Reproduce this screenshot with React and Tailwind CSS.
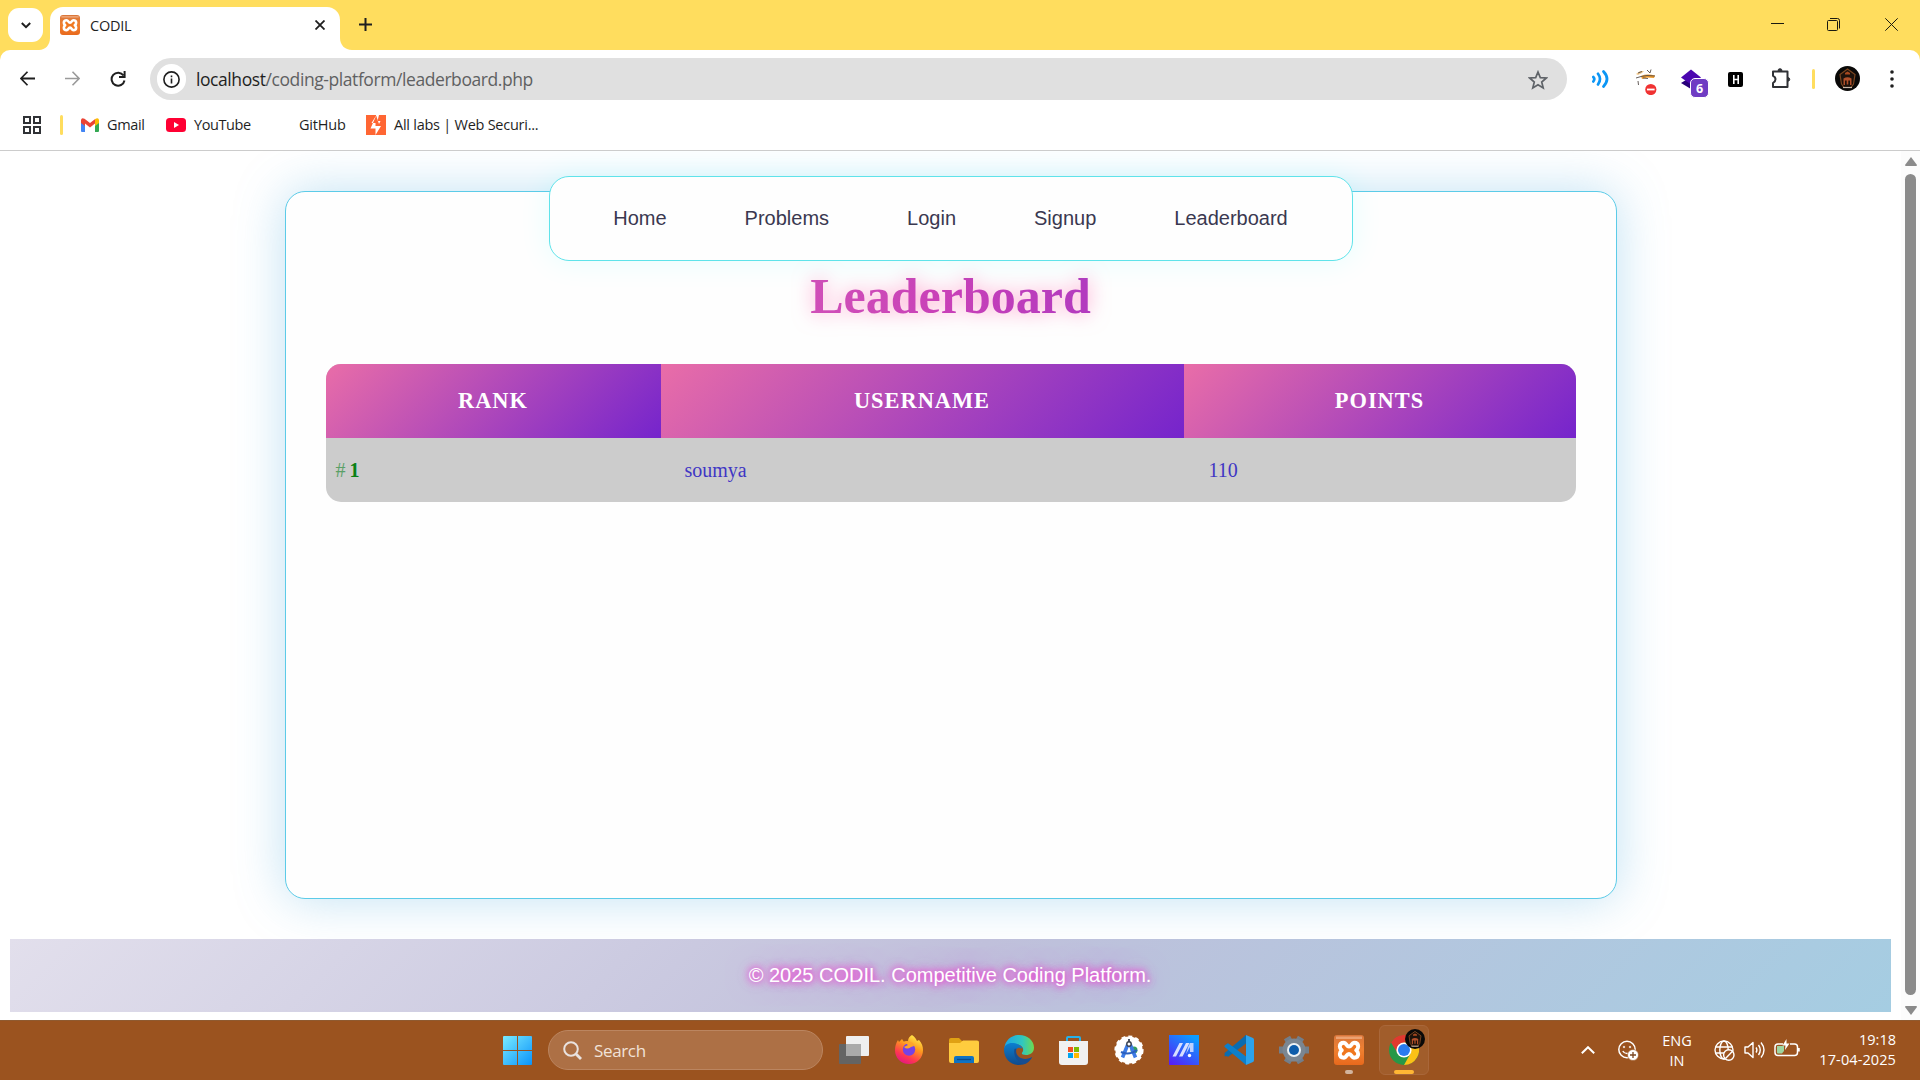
import React from "react";

const ui = "font-['Open_Sans','Noto_Sans',sans-serif]";

function Xampp({ size }) {
  return (
    <span
      className="flex shrink-0 items-center justify-center rounded-[3px] bg-linear-to-b from-[#d9763a] via-[#f08030] to-[#e8691c]"
      style={{ width: size, height: size }}
    >
      <svg viewBox="0 0 30 30" className="h-full w-full" fill="none" strokeLinecap="round" strokeLinejoin="round">
        <path d="M2 1.500H28V4H2Z" fill="#f2b48c" opacity=".7" />
        <path
          d="M10 7.800C7 7.800 5.800 9.500 5.800 11.500C5.800 13.200 6.600 14.300 7.800 15.300C6.600 16.300 5.800 17.400 5.800 19C5.800 21.200 7 22.700 10 22.700C12.500 22.700 12.300 19 15 19C17.700 19 17.500 22.700 20 22.700C23 22.700 24.200 21.200 24.200 19C24.200 17.400 23.400 16.300 22.200 15.300C23.400 14.300 24.200 13.200 24.200 11.500C24.200 9.500 23 7.800 20 7.800C17.500 7.800 17.700 11.500 15 11.500C12.300 11.500 12.500 7.800 10 7.800Z"
          fill="#f0771f"
          stroke="#fff"
          strokeWidth="3.900"
        />
      </svg>
    </span>
  );
}

function Avatar({ className }) {
  return (
    <svg viewBox="0 0 25 25" className={className}>
      <circle cx="12.5" cy="12.500" r="12.500" fill="#0a0908" />
      <path d="M12.500 3L20 8.500L18.500 18L16 21.500H9L6.500 18L5 8.500Z" fill="#1d120b" stroke="#7a4520" strokeWidth="1.200" />
      <path d="M10 7L12.500 5.500L15 7V8.500H10Z" fill="#a8481f" />
      <path d="M8.500 12.500Q12.500 10 16.500 12.500V19H15V14.500H13.300V18.500H11.700V14.500H10V19H8.500Z" fill="#b04f2a" />
      <path d="M8 21.500H17" stroke="#c9b8a8" strokeWidth="1.200" />
    </svg>
  );
}

function TabStrip() {
  return (
    <div className="flex h-[50px] items-start bg-[#ffdd5e] text-[#1f1f1f]">
      <div className="mt-2 ml-2 flex h-[34px] w-[35px] items-center justify-center rounded-[11px] bg-white">
        <svg viewBox="0 0 10 7" className="h-[7px] w-[10px]" fill="none" stroke="#1f1f1f" strokeWidth="2">
          <path d="M.8 1L5 5.200L9.200 1" />
        </svg>
      </div>
      <svg viewBox="0 0 12 12" className="-ml-[4px] mt-[38px] h-3 w-[11px]" preserveAspectRatio="none">
        <path d="M12 0V12H0C7 12 12 7 12 0Z" fill="#fff" />
      </svg>
      <div className="mt-[7px] flex h-[43px] w-[290px] items-start rounded-t-[13px] bg-white pl-[10px]">
        <span className="mt-2 flex">
          <Xampp size={20} />
        </span>
        <span className={`mt-[8px] ml-[10px] w-[225px] text-[14.500px] leading-[22px] tracking-[-0.250px] ${ui}`}>CODIL</span>
        <svg viewBox="0 0 10 10" className="mt-[13px] h-[10px] w-[10px]" fill="none" stroke="#1f1f1f" strokeWidth="1.800">
          <path d="M.5.5L9.500 9.500M9.500.5L.5 9.500" />
        </svg>
      </div>
      <svg viewBox="0 0 12 12" className="mt-[38px] h-3 w-3">
        <path d="M0 0V12H12C5 12 0 7 0 0Z" fill="#fff" />
      </svg>
      <svg viewBox="0 0 13 13" className="mt-[18px] ml-[7px] h-[13px] w-[13px]" stroke="#1f1f1f" strokeWidth="2">
        <path d="M6.500 0V13M0 6.500H13" />
      </svg>
      <div className="mt-[18px] mr-[22px] ml-auto flex items-start gap-[43px]">
        <svg viewBox="0 0 13 13" className="h-[13px] w-[13px]" stroke="#1a1a10">
          <path d="M0 5.500H13" />
        </svg>
        <svg viewBox="0 0 13 13" className="h-[13px] w-[13px]" fill="none" stroke="#1a1a10">
          <rect x=".5" y="2.500" width="10" height="10" rx="1" />
          <path d="M3 .5H10.500Q12.500.5 12.500 2.500V10.500" />
        </svg>
        <svg viewBox="0 0 13 13" className="ml-[2px] h-[13px] w-[13px]" stroke="#1a1a10">
          <path d="M.3.3L12.700 12.700M12.700.3L.3 12.700" />
        </svg>
      </div>
    </div>
  );
}

function Toolbar() {
  return (
    <div className="bg-[#ffdd5e]">
      <div className="flex h-[58px] items-start rounded-t-[10px] bg-white pt-2 pl-5">
        <svg viewBox="0 0 16 16" className="mt-[13px] h-[15px] w-[15px]" fill="none" stroke="#1f1f1f" strokeWidth="1.900">
          <path d="M8 .8L1 8L8 15.200M1 8H16" />
        </svg>
        <svg viewBox="0 0 16 16" className="mt-[13px] ml-[30px] h-[15px] w-[15px]" fill="none" stroke="#9a9a9a" strokeWidth="1.700">
          <path d="M8 .8L15 8L8 15.200M15 8H0" />
        </svg>
        <svg viewBox="0 0 16 16" className="mt-[13px] ml-[30px] h-[16px] w-[16px]" fill="none" stroke="#1f1f1f" strokeWidth="2">
          <path d="M13.500 4.500A6.500 6.500 0 1 0 14.500 9.500M14.600 0V6H9" />
        </svg>
        <div className="ml-[24px] flex h-[42px] w-[1417px] items-center rounded-full bg-[#e0e0e0] pl-[7px]">
          <span className="flex h-[30px] w-[29px] items-center justify-center rounded-full bg-white">
            <svg viewBox="0 0 17 17" className="h-[17px] w-[17px]" fill="none" stroke="#1f1f1f" strokeWidth="1.600">
              <circle cx="8.500" cy="8.500" r="7.600" />
              <path d="M8.500 7.500V12.500M8.500 4.500V6.200" />
            </svg>
          </span>
          <span className={`ml-[10px] w-[1332px] text-[17.500px] leading-6 tracking-[-0.420px] whitespace-nowrap text-[#5f6062] ${ui}`}>
            <span className="text-[#1f1f1f]">localhost</span>/coding-platform/leaderboard.php
          </span>
          <svg viewBox="0 0 20 20" className="mt-px h-5 w-5 shrink-0" fill="none" stroke="#5f6368" strokeWidth="1.700">
            <path d="M10 2L12.300 7.600L18.300 8L13.700 12L15.200 17.900L10 14.700L4.800 17.900L6.300 12L1.700 8L7.700 7.600Z" />
          </svg>
        </div>
        <svg viewBox="0 0 17 18" className="mt-[12px] ml-[25px] h-[18px] w-[17px]" fill="none" stroke="#0c96f5" strokeWidth="2.700" strokeLinecap="round">
          <path d="M1.300 7Q3.300 9 1.300 11.500M6 3.800Q10 9 6 14.500M11.500 1.500Q18.500 9 11.500 16.500" />
        </svg>
        <svg viewBox="0 0 22 27" className="mt-[10px] ml-[26px] h-[27px] w-[22px]">
          <path d="M1 6L5 3L9 3L7 5L3 7Z" fill="#f3c98c" />
          <path d="M6 8Q12 5.500 20 7.500L19 10L12 9.500L7 11Z" fill="#f09a2a" />
          <path d="M1 10L6 8.500L12 7.500L20 8M12 2L15 5L16 1.500M3 5L7 3.500M3 13L3.500 17M8 10L13 10.500" stroke="#554c48" strokeWidth=".9" fill="none" />
          <circle cx="15.800" cy="21.500" r="5.600" fill="#f03232" />
          <path d="M12 21.500H19.600" stroke="#fff" strokeWidth="1.800" />
        </svg>
        <svg viewBox="0 0 29 30" className="mt-[10px] ml-[23px] h-[30px] w-[29px]">
          <path d="M1 15L11 9L21 15L11 21Z" fill="#28007a" />
          <path d="M1 9.500L11 1.500L21 9.500L11 16.500Z" fill="#4b06b0" />
          <rect x="10.500" y="10.500" width="18" height="19" rx="4.500" fill="#6f3cc3" stroke="#fff" />
          <text x="19.500" y="25" textAnchor="middle" fontSize="12.500" fontWeight="700" fill="#fff" fontFamily="Open Sans">
            6
          </text>
        </svg>
        <span className="mt-[14px] ml-[19px] flex h-[15px] w-[15px] items-center justify-center rounded-[2px] bg-black">
          <svg viewBox="0 0 6 9" className="h-[9px] w-[6px]" stroke="#fff" strokeWidth="1.600">
            <path d="M.8 0V9M5.200 0V9M1 4.500H5" />
          </svg>
        </span>
        <svg viewBox="0 0 22 21" className="mt-[10px] ml-[27px] h-[21px] w-[22px]" fill="none" stroke="#303236" strokeWidth="2" strokeLinejoin="round">
          <path d="M3 3.500H17.500V19H3V15Q5.500 13.500 5.500 11.300Q5.500 9 3 7.800Z" />
          <path d="M8 2.700A2 2 0 0 1 12 2.700ZM18.500 9.500A2 2 0 0 1 18.500 13.200Z" fill="#303236" strokeWidth="1" />
        </svg>
        <span className="mt-[11px] ml-[20px] h-5 w-[3px] rounded-full bg-[#ffdd5e]" />
        <Avatar className="mt-2 ml-[20px] h-[25px] w-[25px]" />
        <svg viewBox="0 0 4 18" className="mt-[12px] ml-[30px] h-[18px] w-[4px]" fill="#1f1f1f">
          <circle cx="2" cy="2" r="1.800" />
          <circle cx="2" cy="9" r="1.800" />
          <circle cx="2" cy="16" r="1.800" />
        </svg>
      </div>
      <div className={`flex h-[43px] items-start border-b border-[#cccccc] bg-white pt-[7px] pl-[23px] text-[14.500px] leading-5 whitespace-nowrap text-[#1f1f1f] ${ui}`}>
        <svg viewBox="0 0 18 18" className="mt-[1px] h-[18px] w-[18px]" fill="none" stroke="#303236" strokeWidth="2">
          <path d="M1 1H7V7H1ZM11 1H17V7H11ZM1 11H7V17H1ZM11 11H17V17H11Z" />
        </svg>
        <span className="ml-[19px] h-5 w-[3px] rounded-full bg-[#ffdd5e]" />
        <svg viewBox="0 0 18 14" className="mt-[3px] ml-[18px] h-[14px] w-[18px]">
          <path d="M0 2V13Q0 14 1 14H4V5Z" fill="#4285f4" />
          <path d="M18 2V13Q18 14 17 14H14V5Z" fill="#34a853" />
          <path d="M0 2Q.5-.8 3.500.8L9 5L14.500.8L14 5.500L9 9.500L4 5.500V8L0 5Z" fill="#ea4335" />
          <path d="M14 1.200Q17.500-.8 18 2V5L14 8Z" fill="#fbbc04" />
        </svg>
        <span className="ml-[8px] w-[38px] tracking-[-0.350px]">Gmail</span>
        <svg viewBox="0 0 20 14" className="mt-[3px] ml-[21px] h-[14px] w-5">
          <rect width="20" height="14" rx="3.500" fill="#ff0033" />
          <path d="M8 4L13 7L8 10Z" fill="#fff" />
        </svg>
        <span className="ml-[8px] w-[58px] tracking-[-0.400px]">YouTube</span>
        <span className="ml-[47px] w-[47px] tracking-[-0.200px]">GitHub</span>
        <svg viewBox="0 0 20 20" className="ml-[20px] h-5 w-5">
          <rect width="20" height="20" fill="#ff6633" />
          <path d="M10.500 0L5.500 8H9.500V11H15L9.500 20V13.500H4.500L10.500 0ZM10 0H13L11.500 6H14.500L13 9" fill="#fff" />
        </svg>
        <span className="ml-[8px] tracking-[-0.250px]">All labs | Web Securi...</span>
      </div>
    </div>
  );
}

const links = ["Home", "Problems", "Login", "Signup", "Leaderboard"];
const columns = ["RANK", "USERNAME", "POINTS"];

function Page() {
  return (
    <div className="flex h-[869px] bg-white">
      <main className="relative flex-1 overflow-hidden px-[10px] pt-10">
        <section className="mx-auto h-[708px] w-[1332px] rounded-[20px] border border-[#5ccbe8] bg-[#fefefe] px-10 pt-[74px] font-['Liberation_Serif',serif] shadow-[0_0_50px_rgba(79,172,222,0.360)]">
          <h1 className="mx-auto w-fit bg-linear-to-r from-[#d04fb8] via-[#c840b8] to-[#b23abf] bg-clip-text text-[50px] leading-[60px] font-bold text-transparent drop-shadow-[0_0_10px_rgba(255,80,160,0.550)]">
            Leaderboard
          </h1>
          <div className="mt-[38px] grid grid-cols-[335px_523px_392px] grid-rows-[74px_64px] overflow-hidden rounded-[15px] bg-[#cccccc]">
            {columns.map((c) => (
              <div
                key={c}
                className="flex items-center justify-center bg-linear-[135deg] from-[#e96da8] to-[#7524cc] text-[22.400px] font-bold tracking-[1px] text-white"
              >
                {c}
              </div>
            ))}
            <div className="flex items-center pb-px pl-[10px] text-[20px] text-[#5aa067]">
              <span># </span>
              <b className="ml-[4px] text-[#0b8015]">1</b>
            </div>
            <div className="flex items-center pb-px pl-6 text-[20px] text-[#3f36c4]">soumya</div>
            <div className="flex items-center pb-px pl-[25px] text-[20px] text-[#3f36c4]">110</div>
          </div>
        </section>
        <nav className="absolute top-[25px] left-[549px] flex h-[85px] w-[804px] items-center justify-center gap-[78px] rounded-[20px] border border-[#5fe3ea] bg-[#fefefe] pr-px pb-[2px] font-['Liberation_Sans',sans-serif] text-[20px] text-[#3a3850] shadow-[0_0_30px_rgba(0,255,255,0.100)]">
          {links.map((l) => (
            <span key={l}>{l}</span>
          ))}
        </nav>
        <footer className="relative mt-10 flex h-[73px] items-center justify-center bg-linear-[135deg] from-[#e2dfec] via-[#c0c0db] to-[#a5cde2] pr-px pb-[2px] font-['Liberation_Sans',sans-serif] text-[20px] text-white [text-shadow:0_0_6px_#f03cd0,0_0_10px_#e93ccf,0_0_24px_rgba(230,110,230,0.600)]">
          © 2025 CODIL. Competitive Coding Platform.
        </footer>
      </main>
      <div className="flex w-[19px] flex-col items-center bg-[#fcfcfc] pt-[6px] pb-[5px]">
        <svg viewBox="0 0 12 9" className="h-[9px] w-3" fill="#8b8b8b">
          <path d="M6 0L12 8Q12 9 11 9H1Q0 9 0 8Z" />
        </svg>
        <span className="mt-2 mb-[11px] w-[11px] flex-1 rounded-full bg-[#8b8b8b]" />
        <svg viewBox="0 0 12 9" className="h-[9px] w-3" fill="#8b8b8b">
          <path d="M6 9L12 1Q12 0 11 0H1Q0 0 0 1Z" />
        </svg>
      </div>
    </div>
  );
}

function AppIcon({ children }) {
  return (
    <svg viewBox="0 0 30 30" className="h-[30px] w-[30px] shrink-0">
      {children}
    </svg>
  );
}

function Taskbar() {
  return (
    <div className={`flex h-[60px] border-t border-[#8f5a30] bg-[#9b531f] text-white ${ui}`}>
      <svg viewBox="0 0 29 29" className="mt-[15px] ml-[503px] h-[29px] w-[29px]">
        <defs>
          <linearGradient id="win" x1="0" y1="0" x2="1" y2="1">
            <stop stopColor="#7aebff" />
            <stop offset="1" stopColor="#0a93fa" />
          </linearGradient>
        </defs>
        <path d="M1 0H14V14H0V1Q0 0 1 0ZM15 0H28Q29 0 29 1V14H15ZM0 15H14V29H1Q0 29 0 28ZM15 15H29V28Q29 29 28 29H15Z" fill="url(#win)" />
      </svg>
      <div className="mt-[9px] ml-4 flex h-10 w-[275px] items-center rounded-full border border-[#bb8560] bg-[#ad7045] pl-[14px]">
        <svg viewBox="0 0 19 19" className="h-[19px] w-[19px]" fill="none" stroke="#e9e2df" strokeWidth="2">
          <circle cx="8" cy="8" r="6.800" />
          <path d="M13 13L18 18" strokeWidth="2.800" />
        </svg>
        <span className="mt-px ml-3 text-[17px] tracking-[-0.350px] text-[#f1e2d8]">Search</span>
      </div>
      <div className="mt-[14px] ml-4 flex h-[30px] gap-[25px]">
        <AppIcon>
          <rect x="7" y="1" width="23" height="20" rx="1" fill="#efefef" />
          <rect x="0" y="9" width="22" height="20" rx="1" fill="#646464" />
          <path d="M7 9H22V21H7Z" fill="#aaaaaa" />
        </AppIcon>
        <AppIcon>
          <defs>
            <linearGradient id="ff" x1=".8" y1="0" x2=".3" y2="1">
              <stop stopColor="#fff44f" />
              <stop offset=".4" stopColor="#ff9a1e" />
              <stop offset=".75" stopColor="#ff3750" />
              <stop offset="1" stopColor="#e31587" />
            </linearGradient>
          </defs>
          <path d="M18 0C21 2 22 4 23 6L25 5C28 8 29 12 29 15C29 23 23 29 15 29C7 29 1 23 1 15C1 11 2 8 4 5L5 7L8 4L10 7C12 7 13 6 14 6C14 3 16 1 18 0Z" fill="url(#ff)" />
          <circle cx="15" cy="14.500" r="6.200" fill="#7542e5" />
          <path d="M5 8Q10 6 14 10L10 12Q13 15 17 12L20 11Q20 8 17 7Q13 5 9 7Z" fill="#ffa52a" />
        </AppIcon>
        <AppIcon>
          <path d="M0 5Q0 3 2 3H10L13 6H28Q30 6 30 8V12H0Z" fill="#e0a113" />
          <path d="M0 8H11L14 5.500H28Q30 5.500 30 7.500V26Q30 28 28 28H2Q0 28 0 26Z" fill="#ffcc3e" />
          <path d="M5 28V23Q5 21 7 21H23Q25 21 25 23V28Z" fill="#0f73c3" />
          <path d="M8 24.500H22" stroke="#084b8c" strokeWidth="1.300" />
        </AppIcon>
        <AppIcon>
          <defs>
            <linearGradient id="ed" x1="0" y1=".3" x2="1" y2=".3">
              <stop stopColor="#1ca5e8" />
              <stop offset=".6" stopColor="#30c7c0" />
              <stop offset="1" stopColor="#6ddc50" />
            </linearGradient>
            <linearGradient id="ed2" x1="0" y1="0" x2="0" y2="1">
              <stop stopColor="#0b7fd0" />
              <stop offset="1" stopColor="#114a8b" />
            </linearGradient>
          </defs>
          <path d="M.5 13C1 5 8 0 15 0C24 0 30 6 30 12.500C30 18 26 20 22 20C18 20 17 18.500 18.500 17C20.500 14 18 9.500 12.500 9.500C6 9.500 2 12 .5 13Z" fill="url(#ed)" />
          <path d="M0 15C0 10 4 8 8 8C14 8 18 11 18.500 14C15 11 10 14 11 19C12 24 20 27 28 22C25 27 21 30 15 30C6 30 0 23 0 15Z" fill="url(#ed2)" />
          <path d="M10.500 14C9 20 13 28 20 29.300C23.500 28.300 27 25 28 22C20 27 10 22 12.500 13.500Z" fill="#174e91" />
        </AppIcon>
        <AppIcon>
          <path d="M8 7V3Q8 2 9 2H20Q21 2 21 3V7" fill="none" stroke="#27b1e8" strokeWidth="2" />
          <path d="M0 6H29V27Q29 30 26 30H3Q0 30 0 27Z" fill="#f1f1f1" />
          <path d="M9 12H14V17H9Z" fill="#f25022" />
          <path d="M15 12H20V17H15Z" fill="#7fba00" />
          <path d="M9 18H14V23H9Z" fill="#00a4ef" />
          <path d="M15 18H20V23H15Z" fill="#ffb900" />
        </AppIcon>
        <AppIcon>
          <circle cx="15" cy="15" r="13.600" fill="#fff" stroke="#fff" strokeWidth="2" strokeDasharray="4 3" />
          <circle cx="20" cy="15" r="3.500" fill="#33a05a" />
          <path d="M14 9L8.500 22.500M16 9L21.500 22.500" stroke="#3d7be5" strokeWidth="3.600" />
          <path d="M7 17Q15 21 23 15" fill="none" stroke="#2b60bf" strokeWidth="2" />
          <circle cx="15" cy="9" r="2.200" fill="#fff" stroke="#3b4250" strokeWidth="1.400" />
          <path d="M15 4V7" stroke="#3b4250" strokeWidth="1.800" />
        </AppIcon>
        <AppIcon>
          <defs>
            <linearGradient id="mm" x1="0" y1="1" x2=".7" y2="0">
              <stop stopColor="#5b18f5" />
              <stop offset="1" stopColor="#0c9bff" />
            </linearGradient>
          </defs>
          <rect width="30" height="30" fill="url(#mm)" />
          <path d="M3.500 21.500L10.500 8H14L7 21.500ZM10 21.500L17 8H20.500L13.500 21.500Z" fill="#d7dfff" />
          <path d="M19 12L21 8H24.500V17H21V12L17 19Z" fill="#bcd0ff" />
          <circle cx="20.500" cy="20.500" r="1.700" fill="#fff" />
        </AppIcon>
        <AppIcon>
          <path d="M22 0L4 18.500L0 20.500L1.500 21.500L4.500 20L22 7Z" fill="#0a6cb0" />
          <path d="M22 0V8.500L4.500 21.500Q3.800 22 3 21.300L.7 19.500Q0 18.700.7 18Z" fill="#0a6cb0" />
          <path d="M22 30V21.500L4.500 8.500Q3.800 8 3 8.700L.7 10.500Q0 11.300.7 12Z" fill="#0d7fcb" />
          <path d="M22 0L29 3Q30 3.500 30 5V25Q30 26.500 29 27L22 30Z" fill="#2ba3ec" />
        </AppIcon>
        <AppIcon>
          <g stroke="#737e89" strokeWidth="7">
            <path d="M8 2.500L22 27.500M22 2.500L8 27.500M0 15H30" />
          </g>
          <circle cx="15" cy="15" r="11.500" fill="#7b8691" />
          <circle cx="15" cy="15" r="7" fill="#edf2f5" />
          <circle cx="15" cy="15" r="5" fill="#0e5dab" />
        </AppIcon>
        <div className="flex flex-col items-center">
          <Xampp size={30} />
          <span className="mt-[5px] h-1 w-2 shrink-0 rounded-full bg-[#d2b49d]" />
        </div>
      </div>
      <div className="relative mt-[4px] ml-[15px] flex h-[50px] w-[50px] flex-col items-center rounded-[6px] border border-[#a9673a] bg-[#a15d2b] pt-[9px]">
        <AppIcon>
          <circle cx="15" cy="15" r="15" fill="#279847" />
          <path d="M2 7.500A15 15 0 0 1 28 7.500H15L8.500 18Z" fill="#e0392f" />
          <path d="M28 7.500A15 15 0 0 1 15 30L21.500 18.500L15 7.500Z" fill="#fbc116" />
          <circle cx="15" cy="15" r="7.600" fill="#fff" />
          <circle cx="15" cy="15" r="6" fill="#2a7bee" />
        </AppIcon>
        <span className="mt-[5px] h-1 w-5 shrink-0 rounded-full bg-[#ffb634]" />
        <Avatar className="absolute top-[3px] right-[3px] h-5 w-5" />
      </div>
      <div className="mr-6 ml-auto flex items-start text-[14.500px] leading-5 whitespace-nowrap">
        <svg viewBox="0 0 14 8" className="mt-[25px] h-2 w-[14px]" fill="none" stroke="#fff" strokeWidth="2">
          <path d="M.8 7.200L7 1.200L13.200 7.200" />
        </svg>
        <svg viewBox="0 0 21 21" className="mt-[19px] ml-[23px] h-[21px] w-[21px]" fill="none" stroke="#fff" strokeWidth="1.500">
          <circle cx="9" cy="9.500" r="8.200" />
          <path d="M4.800 11Q6.500 14 10 13.500" />
          <circle cx="6" cy="7" r=".8" fill="#fff" strokeWidth=".6" />
          <circle cx="12" cy="7" r=".8" fill="#fff" strokeWidth=".6" />
          <circle cx="15" cy="15" r="5.500" fill="#fff" stroke="#9b531f" strokeWidth=".6" />
          <path d="M15 12V18M12 15H18" stroke="#7a4520" strokeWidth="1.300" />
        </svg>
        <div className="mt-[10px] ml-[22px] w-8 text-center">
          <div>ENG</div>
          <div>IN</div>
        </div>
        <svg viewBox="0 0 21 21" className="mt-[19px] ml-[21px] h-[21px] w-[21px]" fill="none" stroke="#fff" strokeWidth="1.400">
          <circle cx="10" cy="10" r="9" />
          <ellipse cx="10" cy="10" rx="4.200" ry="9" />
          <path d="M1.500 7H18.500M1.500 13H10" />
          <circle cx="14.800" cy="15" r="5.200" fill="#9b531f" />
          <path d="M11.500 18.500L18.300 11.500" />
        </svg>
        <svg viewBox="0 0 21 18" className="mt-[20px] ml-[9px] h-[18px] w-[21px]" fill="none" stroke="#fff" strokeWidth="1.400">
          <path d="M1 6V12H4L9 16.500V1.500L4 6Z" strokeLinejoin="round" />
          <path d="M12 6.500Q13.800 9 12 11.500M14.500 4Q18 9 14.500 14M17 1.500Q23 9 17 16.500" />
        </svg>
        <svg viewBox="0 0 26 18" className="mt-[18px] ml-[9px] h-[18px] w-[26px]" fill="none" stroke="#fff" strokeWidth="1.500">
          <path d="M9 5H4Q1 5 1 8V13.500Q1 16.500 4 16.500H20.500Q23.500 16.500 23.500 13.500V8Q23.500 5 20.500 5H16M25 9V12.500" />
          <path d="M3 7H10V12L8 14.500H4Q3 14.500 3 13.500Z" fill="#9fd6a0" stroke="none" />
          <path d="M12.500 0L8.500 6.500H11.500L11 11L15.500 4.500H12.500Z" fill="#fff" stroke="none" />
        </svg>
        <div className="mt-[9px] ml-[18px] flex w-[78px] flex-col items-end">
          <div>19:18</div>
          <div className="tracking-[0.100px]">17-04-2025</div>
        </div>
      </div>
    </div>
  );
}

export default function App() {
  return (
    <div className="h-[1080px] w-[1920px] overflow-hidden bg-white">
      <TabStrip />
      <Toolbar />
      <Page />
      <Taskbar />
    </div>
  );
}
